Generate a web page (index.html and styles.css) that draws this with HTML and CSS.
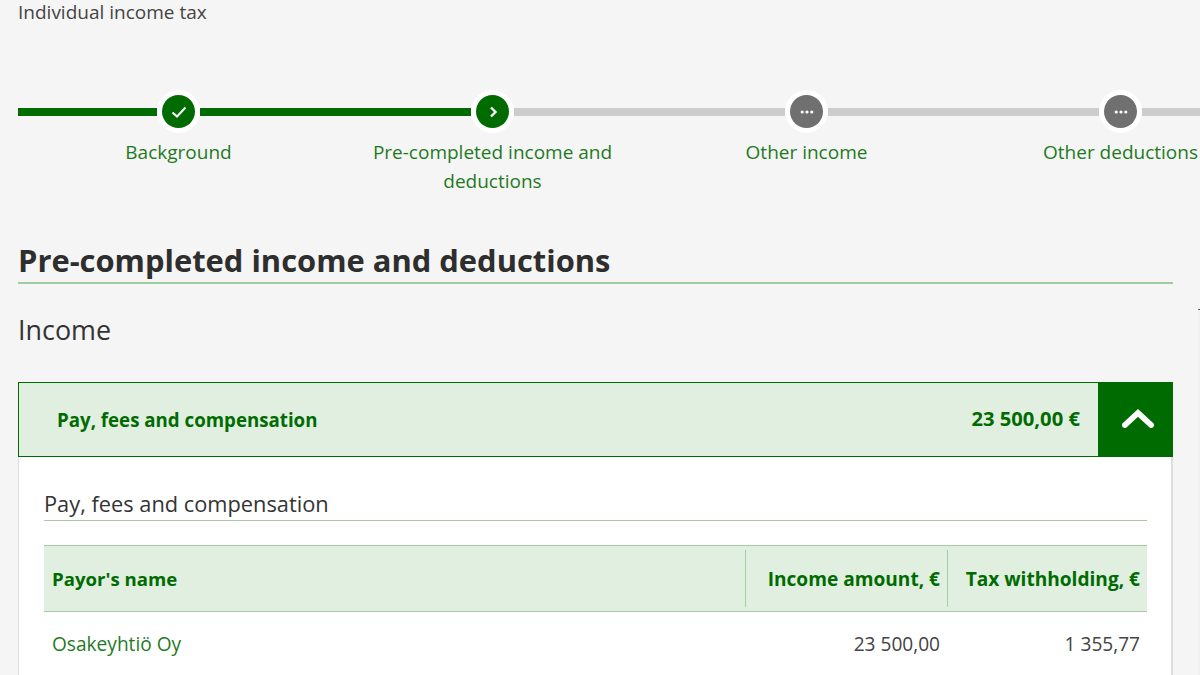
FILE: index.html
```html
<!DOCTYPE html>
<html lang="en">
<head>
<meta charset="utf-8">
<title>Individual income tax</title>
<link rel="stylesheet" href="styles.css">
</head>
<body>
<main class="page">
  <p class="service">Individual income tax</p>
  <ol class="stepper">
    <li class="step step-first">
      <div class="track">
        <span class="seg seg-first seg-done"></span>
        <span class="ring"><span class="dot dot-done">
          <svg class="glyph" viewBox="0 0 16 16"><path d="M1.5 8.5 6 12.5 14.5 3.5" fill="none" stroke="#fff" stroke-width="2"/></svg>
        </span></span>
        <span class="seg seg-done"></span>
      </div>
      <span class="label">Background</span>
    </li>
    <li class="step">
      <div class="track">
        <span class="seg seg-done"></span>
        <span class="ring"><span class="dot dot-done">
          <svg class="glyph" viewBox="0 0 16 16"><path d="M6 3.5 10.5 8 6 12.5" fill="none" stroke="#fff" stroke-width="2.4"/></svg>
        </span></span>
        <span class="seg"></span>
      </div>
      <span class="label">Pre-completed income and deductions</span>
    </li>
    <li class="step">
      <div class="track">
        <span class="seg"></span>
        <span class="ring"><span class="dot dot-todo">
          <svg class="glyph" viewBox="0 0 16 16" fill="#fff"><circle cx="3.2" cy="8" r="1.6"/><circle cx="8" cy="8" r="1.6"/><circle cx="12.8" cy="8" r="1.6"/></svg>
        </span></span>
        <span class="seg"></span>
      </div>
      <span class="label">Other income</span>
    </li>
    <li class="step">
      <div class="track">
        <span class="seg"></span>
        <span class="ring"><span class="dot dot-todo">
          <svg class="glyph" viewBox="0 0 16 16" fill="#fff"><circle cx="3.2" cy="8" r="1.6"/><circle cx="8" cy="8" r="1.6"/><circle cx="12.8" cy="8" r="1.6"/></svg>
        </span></span>
        <span class="seg"></span>
      </div>
      <span class="label">Other deductions</span>
    </li>
  </ol>

  <h1 class="title">Pre-completed income and deductions</h1>
  <h2 class="subtitle">Income</h2>

  <section class="accordion">
    <header class="acc-head">
      <span class="acc-name">Pay, fees and compensation</span>
      <span class="acc-sum">23 500,00 €</span>
      <span class="acc-toggle">
        <svg class="chevron" viewBox="0 0 34 20"><path d="M3 17 17 4 31 17" fill="none" stroke="#fff" stroke-width="6" stroke-linecap="round" stroke-linejoin="miter"/></svg>
      </span>
    </header>
    <div class="acc-body">
      <h3 class="panel-title">Pay, fees and compensation</h3>
      <div class="table">
        <div class="row row-head">
          <div class="cell cell-name head-name">Payor's name</div>
          <div class="cell cell-amount">Income amount, €</div>
          <div class="cell cell-tax">Tax withholding, €</div>
        </div>
        <div class="row row-data">
          <div class="cell cell-name data-name">Osakeyhtiö Oy</div>
          <div class="cell cell-amount">23 500,00</div>
          <div class="cell cell-tax">1 355,77</div>
        </div>
      </div>
    </div>
  </section>
</main>
<div class="edge-sliver"></div>
</body>
</html>
```
FILE: styles.css
```css
* { box-sizing: border-box; }
html, body { margin: 0; height: 100%; overflow: hidden; }
body {
  background: #f5f5f5;
  font-family: "Open Sans", "Noto Sans", sans-serif;
  color: #333;
}
.page { width: 1200px; height: 675px; overflow: hidden; padding: 0 27px 0 18px; }
.service { margin: 0; font-size: 19px; line-height: 24px; color: #444; }
.stepper {
  list-style: none;
  margin: 66px 0 0 3.5px;
  padding: 0;
  display: flex;
  width: 1256px;
}
.step { width: 314px; flex: none; display: flex; flex-direction: column; align-items: center; }
.track { width: 100%; display: flex; align-items: center; height: 43px; }
.seg { flex: 1; height: 8px; background: #ccc; }
.seg-done { background: #006b00; }
.seg-first { flex: 0 0 139px; margin-left: -3.5px; }
.ring {
  width: 43px; height: 43px; flex: none;
  border-radius: 50%;
  background: #fff;
  display: flex; align-items: center; justify-content: center;
}
.dot {
  width: 33px; height: 33px;
  border-radius: 50%;
  display: flex; align-items: center; justify-content: center;
}
.dot-done { background: #006b00; }
.dot-todo { background: #707070; }
.glyph { width: 16px; height: 16px; display: block; }
.label {
  margin-top: 5px;
  width: 250px;
  text-align: center;
  font-size: 19px;
  line-height: 29px;
  color: #1f7a1f;
}
.title {
  margin: 44px 0 0;
  font-size: 30.9px;
  line-height: 40px;
  font-weight: 700;
  color: #2e2e2e;
  width: 1155px;
  border-bottom: 2px solid #9fcd9f;
  padding-bottom: 2px;
}
.subtitle {
  margin: 28px 0 0;
  font-size: 26.9px;
  line-height: 36px;
  font-weight: 400;
  color: #333;
}
.accordion { width: 1155px; margin-top: 34px; }
.acc-head {
  height: 75px;
  background: #e0efe0;
  border: 1px solid #006b00;
  display: flex;
  align-items: center;
  padding-left: 38px;
  color: #006b00;
  font-weight: 700;
}
.acc-name { flex: 1; font-size: 18.7px; }
.acc-sum { margin: 0 18px 3px 0; font-size: 20.2px; }
.acc-toggle {
  width: 75px; height: 75px; margin-right: -1px;
  background: #006b00;
  display: flex; align-items: center; justify-content: center;
  padding: 0 0 3px 5px;
}
.chevron { width: 32px; height: 19px; display: block; }
.acc-body {
  background: #fff;
  border-left: 1px solid #ddd;
  border-right: 2px solid #ddd;
  padding: 31px 24px 0 25px;
  height: 260px;
}
.panel-title {
  margin: 0;
  font-size: 21.8px;
  line-height: 32px;
  font-weight: 400;
  border-bottom: 1px solid #a6cba6;
}
.table { margin-top: 24px; font-size: 19.1px; }
.row { display: grid; grid-template-columns: 701px 202px 200px; }
.row-head {
  height: 67px;
  background: #e0efe0;
  border-top: 1px solid #a6cba6;
  border-bottom: 1px solid #a6cba6;
  align-items: stretch;
  font-weight: 700;
  color: #006b00;
  padding: 4px 0;
}
.row-data { height: 64px; align-items: center; color: #444; }
.cell { padding: 0 7px 0 8px; display: flex; align-items: center; justify-content: flex-end; }
.cell-name { justify-content: flex-start; }
.head-name { font-size: 18.6px; }
.row-head .cell-amount, .row-head .cell-tax { border-left: 1px solid #a6cba6; }
.data-name { color: #1f7a1f; }
.edge-sliver {
  position: absolute;
  top: 309px;
  right: 0;
  bottom: 0;
  width: 2px;
  border-top: 1px solid #666;
  background: #eef3ee;
}
```
